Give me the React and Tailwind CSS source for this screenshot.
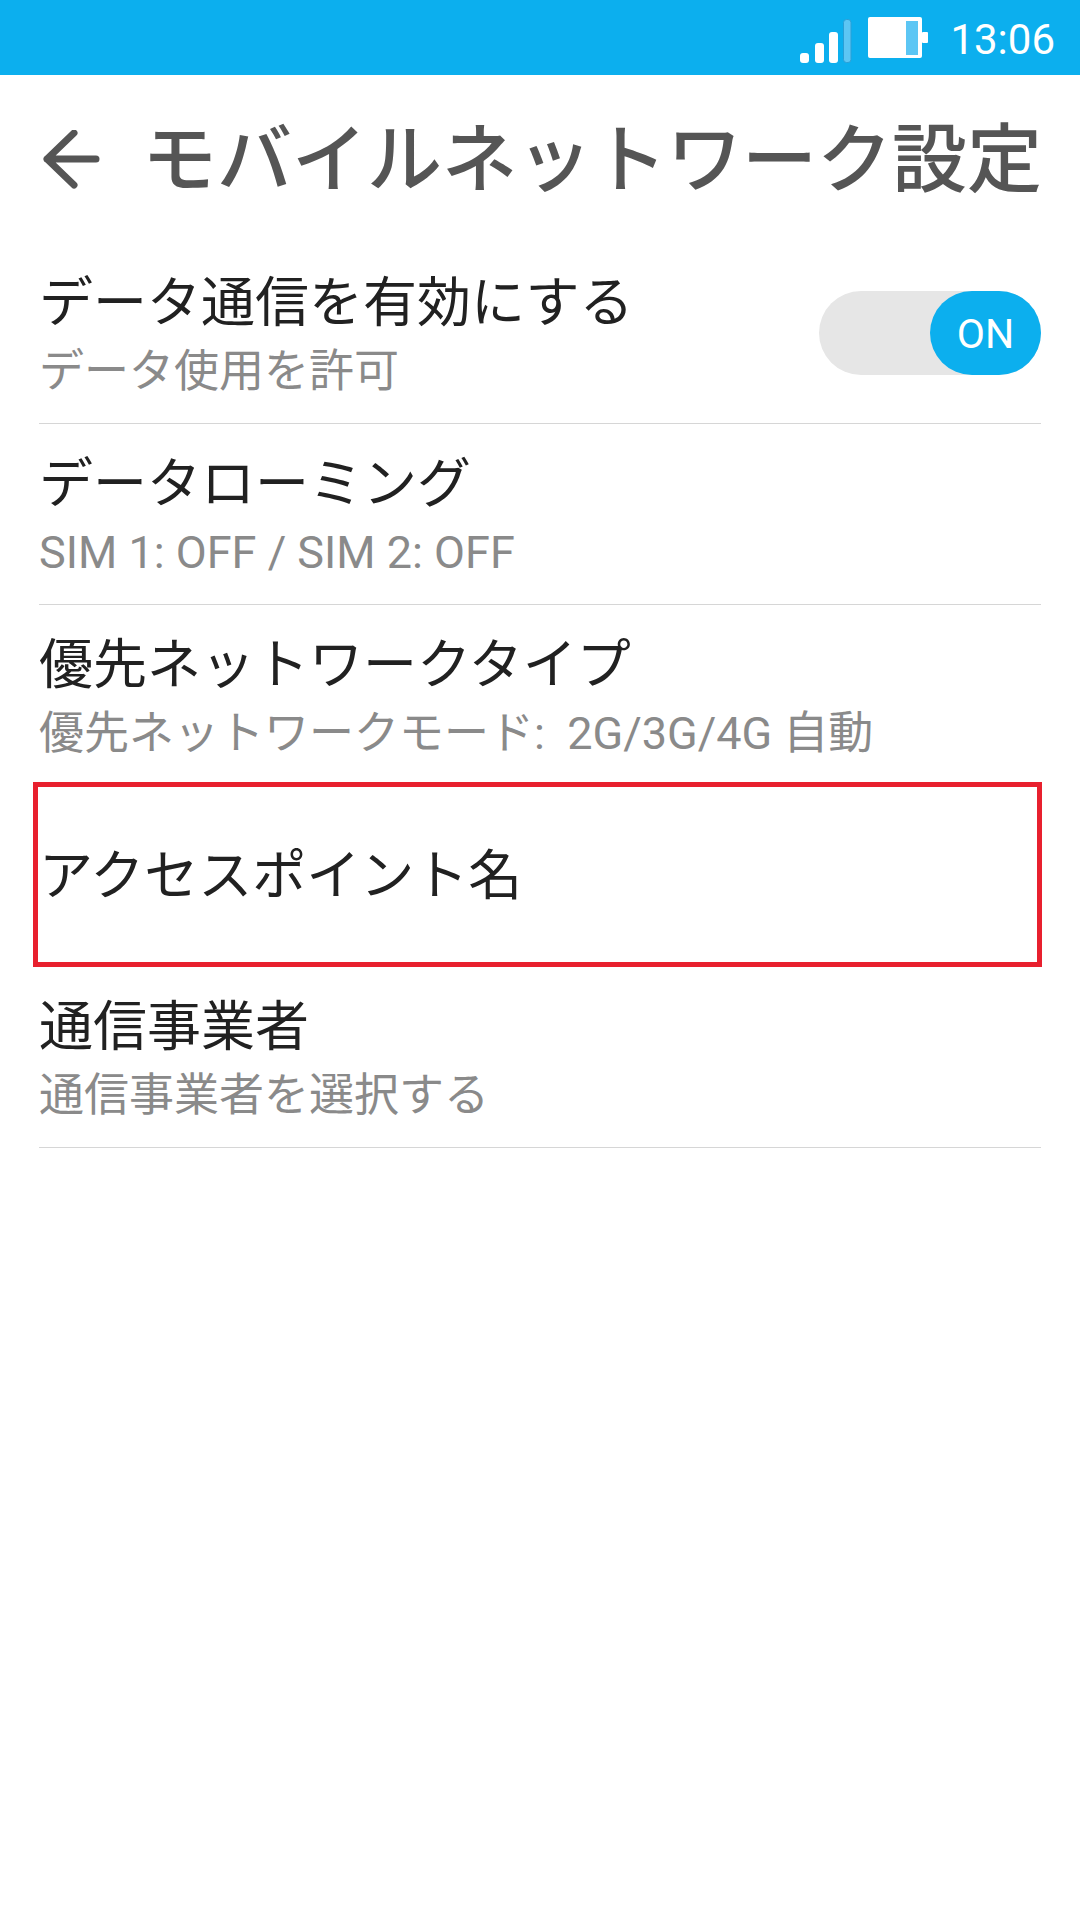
const jp = "font-['Roboto','Noto_Sans_CJK_JP',sans-serif]";

function StatusBar() {
  return (
    <div className="flex h-[75px] items-start justify-end bg-[#0cafee]">
      <svg width="52" height="46" viewBox="0 0 52 46" className="mt-[18px]">
        <rect x="0" y="35" width="9" height="10" rx="3" fill="#fff" />
        <rect x="15" y="25" width="9" height="20" rx="3" fill="#fff" />
        <rect x="29" y="14" width="9" height="31" rx="3" fill="#fff" />
        <rect x="43.5" y="1.5" width="7.5" height="43" rx="3" fill="#5cc6f4" stroke="#2a9fd6" strokeWidth="1" />
      </svg>
      <svg width="60" height="42" viewBox="0 0 60 42" className="ml-[16px] mt-[17px]">
        <rect x="0" y="0" width="54" height="41" rx="2" fill="#fff" />
        <rect x="54" y="15" width="6" height="11" rx="1" fill="#fff" />
        <rect x="38" y="4" width="12" height="34" fill="#5cc6f4" />
      </svg>
      <span className={`ml-[22px] mr-[25px] mt-[15px] text-[42px] leading-[50px] text-white ${jp}`}>13:06</span>
    </div>
  );
}

function Header() {
  return (
    <div className="flex h-[168px] items-start">
      <svg width="62" height="60" viewBox="0 0 62 60" className="ml-[41px] mt-[55px]">
        <path d="M33 3 L6 29 L33 55 M6 29 H55" fill="none" stroke="#555555" strokeWidth="7" strokeLinecap="round" strokeLinejoin="round" />
      </svg>
      <h1 className={`ml-[39px] mt-[41px] whitespace-nowrap text-[75px] font-medium leading-[88px] text-[#555555] ${jp}`}>
        モバイルネットワーク設定
      </h1>
    </div>
  );
}

function Row({ title, sub, children, divider = true }) {
  return (
    <div className={`relative flex h-[181px] items-center justify-between ${divider ? "border-b-[1.5px] border-[#d6d6d6]" : ""}`}>
      <div className={sub ? "pt-[9px]" : ""}>
        <div className={`whitespace-nowrap text-[54px] leading-[68px] text-[#212121] ${jp}`}>{title}</div>
        {sub && <div className={`whitespace-nowrap text-[45px] leading-[68px] text-[#8a8a8a] ${jp}`}>{sub}</div>}
      </div>
      {children}
    </div>
  );
}

function Toggle() {
  return (
    <div className="flex h-[84px] w-[222px] justify-end rounded-full bg-[#e6e6e6]">
      <div className={`flex h-[84px] w-[111px] items-center justify-center rounded-full bg-[#0cafee] pt-1 text-[41px] text-white ${jp}`}>
        ON
      </div>
    </div>
  );
}

export default function App() {
  return (
    <div className="h-[1920px] w-[1080px] overflow-hidden bg-white">
      <StatusBar />
      <Header />
      <div className="px-[39px]">
        <Row title="データ通信を有効にする" sub="データ使用を許可">
          <Toggle />
        </Row>
        <Row title="データローミング" sub="SIM 1: OFF / SIM 2: OFF" />
        <Row title="優先ネットワークタイプ" sub={"優先ネットワークモード:\u00a0 2G/3G/4G 自動"} />
        <Row title="アクセスポイント名" divider={false}>
          <div className="absolute -top-[4px] -left-[6px] -right-[1px] h-[185px] border-[5px] border-[#e8202e]" />
        </Row>
        <Row title="通信事業者" sub="通信事業者を選択する" />
      </div>
    </div>
  );
}
